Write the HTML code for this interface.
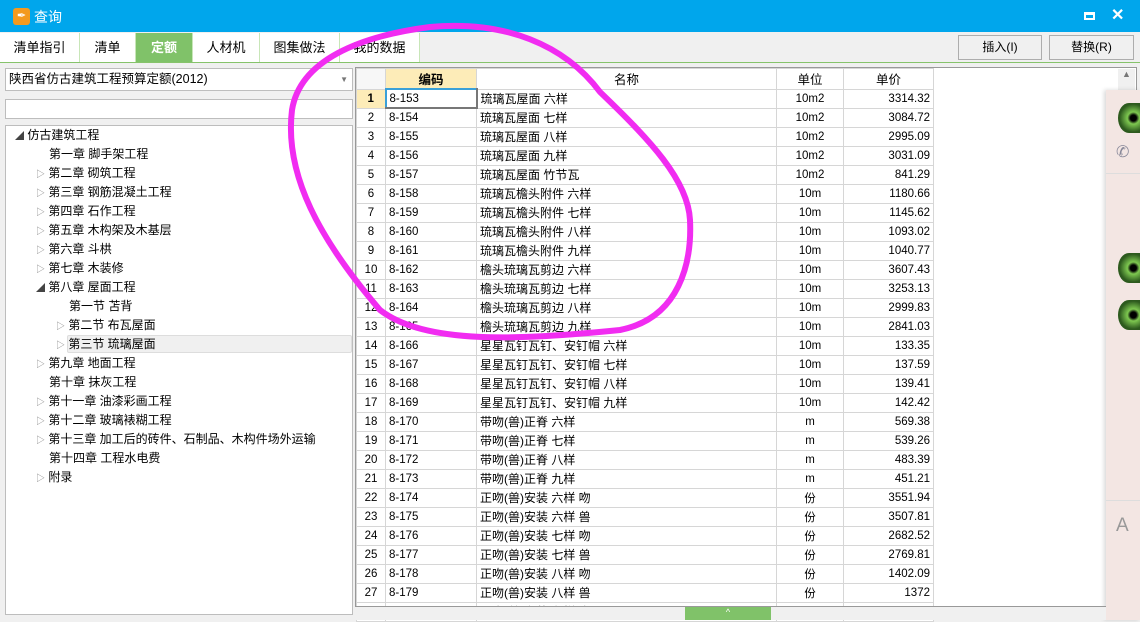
<!DOCTYPE html><html><head><meta charset="utf-8"><style>
*{margin:0;padding:0;box-sizing:border-box}
body{width:1140px;height:620px;overflow:hidden;background:#f0f0f0;font-family:"Liberation Sans","Noto Sans CJK SC",sans-serif;font-size:12px;color:#000;position:relative}
.abs{position:absolute}
.title{left:0;top:0;width:1140px;height:32px;background:#00a6ec;color:#fff}
.tab{top:33px;height:29px;line-height:29px;text-align:center;font-size:13px;background:#fff;border-right:1px solid #c8e6b8}
.btn{top:35px;height:25px;border:1px solid #adadad;background:#f0f0f0;text-align:center;line-height:23px;font-size:12px}
table{border-collapse:collapse;table-layout:fixed;position:absolute;left:356px;top:68px;background:#fff}
td{height:19px;border:1px solid #d6d6d6;font-size:11.5px;padding:0 3px;white-space:nowrap;overflow:hidden}
.tree div{position:absolute;height:19px;line-height:19px;font-size:12px;white-space:nowrap}
.tri{color:#888;font-size:9px}
</style></head><body>
<div class="abs title"><div class="abs" style="left:13px;top:8px;width:17px;height:17px;background:#f39a1e;border-radius:3px;color:#fff;font-size:11px;text-align:center;line-height:17px">&#x2712;</div><div class="abs" style="left:34px;top:7px;font-size:14px">查询</div>
<div class="abs" style="left:1084px;top:12px;width:11px;height:8px;border:2px solid #fff;border-top-width:3px"></div>
<div class="abs" style="left:1111px;top:5px;font-size:16px;font-weight:bold">✕</div></div>
<div class="abs" style="left:0;top:32px;width:1140px;height:31px;background:#f0f0f0;border-bottom:1px solid #86c36b"></div>
<div class="abs tab" style="left:0;width:80px">清单指引</div>
<div class="abs tab" style="left:80px;width:56px">清单</div>
<div class="abs tab" style="left:136px;width:57px;background:#80c269;color:#fff;font-weight:bold">定额</div>
<div class="abs tab" style="left:193px;width:67px">人材机</div>
<div class="abs tab" style="left:260px;width:80px">图集做法</div>
<div class="abs tab" style="left:340px;width:80px">我的数据</div>
<div class="abs btn" style="left:958px;width:84px">插入(I)</div>
<div class="abs btn" style="left:1049px;width:85px">替换(R)</div>
<div class="abs" style="left:5px;top:68px;width:348px;height:23px;background:#fff;border:1px solid #bdbdbd;line-height:21px;padding-left:3px;font-size:12.5px">陕西省仿古建筑工程预算定额(2012)<span class="abs" style="right:4px;top:0;color:#777;font-size:8px">▼</span></div>
<div class="abs" style="left:5px;top:99px;width:348px;height:20px;background:#fff;border:1px solid #bdbdbd"></div>
<div class="abs tree" style="left:5px;top:125px;width:348px;height:490px;background:#fff;border:1px solid #bdbdbd">
<div style="left:9px;top:0"><span class="tri" style="color:#444">◢</span> 仿古建筑工程</div>
<div style="left:43px;top:19px">第一章 脚手架工程</div>
<div style="left:30px;top:38px"><span class="tri">▷</span> 第二章 砌筑工程</div>
<div style="left:30px;top:57px"><span class="tri">▷</span> 第三章 钢筋混凝土工程</div>
<div style="left:30px;top:76px"><span class="tri">▷</span> 第四章 石作工程</div>
<div style="left:30px;top:95px"><span class="tri">▷</span> 第五章 木构架及木基层</div>
<div style="left:30px;top:114px"><span class="tri">▷</span> 第六章 斗栱</div>
<div style="left:30px;top:133px"><span class="tri">▷</span> 第七章 木装修</div>
<div style="left:30px;top:152px"><span class="tri" style="color:#444">◢</span> 第八章 屋面工程</div>
<div style="left:63px;top:171px">第一节 苫背</div>
<div style="left:50px;top:190px"><span class="tri">▷</span> 第二节 布瓦屋面</div>
<div style="left:61px;top:209px;width:285px;height:18px;background:#f0f0f0;border:1px solid #ddd;border-radius:2px"></div>
<div style="left:50px;top:209px"><span class="tri">▷</span> 第三节 琉璃屋面</div>
<div style="left:30px;top:228px"><span class="tri">▷</span> 第九章 地面工程</div>
<div style="left:43px;top:247px">第十章 抹灰工程</div>
<div style="left:30px;top:266px"><span class="tri">▷</span> 第十一章 油漆彩画工程</div>
<div style="left:30px;top:285px"><span class="tri">▷</span> 第十二章 玻璃裱糊工程</div>
<div style="left:30px;top:304px"><span class="tri">▷</span> 第十三章 加工后的砖件、石制品、木构件场外运输</div>
<div style="left:43px;top:323px">第十四章 工程水电费</div>
<div style="left:30px;top:342px"><span class="tri">▷</span> 附录</div>
</div>
<div class="abs" style="left:355px;top:67px;width:782px;height:540px;background:#fff;border:1px solid #999"></div>
<table id="g"><colgroup><col style="width:29px"><col style="width:91px"><col style="width:300px"><col style="width:67px"><col style="width:90px"></colgroup>
<tr style="background:#fff"><td style="background:#f7f7f7"></td><td style="background:#fdecb8;text-align:center;font-weight:bold;font-size:12.5px">编码</td><td style="text-align:center;font-size:12.5px">名称</td><td style="text-align:center;font-size:12.5px">单位</td><td style="text-align:center;font-size:12.5px">单价</td></tr>
</table>
<div class="abs" style="left:1118px;top:69px;width:17px;height:536px;background:#f0f0f0"><div style="color:#777;font-size:9px;text-align:center">▲</div></div>
<div class="abs" style="left:1106px;top:90px;width:34px;height:530px;background:#f3e6e3;box-shadow:-2px 0 4px rgba(0,0,0,.15)">
<div class="abs" style="left:12px;top:13px;width:22px;height:30px;border-radius:50% 0 0 50%;background:radial-gradient(circle at 70% 50%,#000 3px,#7ec850 6px,#2d5a1e 14px)"></div>
<div class="abs" style="left:12px;top:163px;width:22px;height:30px;border-radius:50% 0 0 50%;background:radial-gradient(circle at 70% 50%,#000 3px,#7ec850 6px,#2d5a1e 14px)"></div>
<div class="abs" style="left:12px;top:210px;width:22px;height:30px;border-radius:50% 0 0 50%;background:radial-gradient(circle at 70% 50%,#000 3px,#7ec850 6px,#2d5a1e 14px)"></div>
<div class="abs" style="left:10px;top:52px;color:#889;font-size:16px">✆</div>
<div class="abs" style="left:0;top:83px;width:34px;border-top:1px solid #ddd"></div>
<div class="abs" style="left:0;top:410px;width:34px;border-top:1px solid #ddd"></div>
<div class="abs" style="left:10px;top:425px;color:#999;font-size:19px">A</div>
</div>
<svg class="abs" style="left:0;top:0" width="1140" height="620"><path d="M600 92 C565 45 505 20 430 27 C360 36 300 60 292 110 C284 175 320 240 380 310 C425 345 520 340 620 330 C680 318 692 262 690 220 C688 180 650 140 600 92" fill="none" stroke="#f12cf1" stroke-width="6" stroke-linecap="round"/></svg>
<script>
var d=[["8-153","琉璃瓦屋面 六样","10m2","3314.32"],["8-154","琉璃瓦屋面 七样","10m2","3084.72"],["8-155","琉璃瓦屋面 八样","10m2","2995.09"],["8-156","琉璃瓦屋面 九样","10m2","3031.09"],["8-157","琉璃瓦屋面 竹节瓦","10m2","841.29"],["8-158","琉璃瓦檐头附件 六样","10m","1180.66"],["8-159","琉璃瓦檐头附件 七样","10m","1145.62"],["8-160","琉璃瓦檐头附件 八样","10m","1093.02"],["8-161","琉璃瓦檐头附件 九样","10m","1040.77"],["8-162","檐头琉璃瓦剪边 六样","10m","3607.43"],["8-163","檐头琉璃瓦剪边 七样","10m","3253.13"],["8-164","檐头琉璃瓦剪边 八样","10m","2999.83"],["8-165","檐头琉璃瓦剪边 九样","10m","2841.03"],["8-166","星星瓦钉瓦钉、安钉帽 六样","10m","133.35"],["8-167","星星瓦钉瓦钉、安钉帽 七样","10m","137.59"],["8-168","星星瓦钉瓦钉、安钉帽 八样","10m","139.41"],["8-169","星星瓦钉瓦钉、安钉帽 九样","10m","142.42"],["8-170","带吻(兽)正脊 六样","m","569.38"],["8-171","带吻(兽)正脊 七样","m","539.26"],["8-172","带吻(兽)正脊 八样","m","483.39"],["8-173","带吻(兽)正脊 九样","m","451.21"],["8-174","正吻(兽)安装 六样 吻","份","3551.94"],["8-175","正吻(兽)安装 六样 兽","份","3507.81"],["8-176","正吻(兽)安装 七样 吻","份","2682.52"],["8-177","正吻(兽)安装 七样 兽","份","2769.81"],["8-178","正吻(兽)安装 八样 吻","份","1402.09"],["8-179","正吻(兽)安装 八样 兽","份","1372"],["8-180","正吻(兽)安装 九样 吻","份","1300"]];
var h="";d.forEach(function(r,i){h+='<tr><td style="text-align:center;'+(i==0?'background:#fdecb8;font-weight:bold':'')+'">'+(i+1)+'</td><td'+(i==0?' style="border:2px solid #777;border-left-color:#3aa0d8;border-top-color:#3aa0d8"':'')+'>'+r[0]+'</td><td style="font-size:12px">'+r[1]+'</td><td style="text-align:center">'+r[2]+'</td><td style="text-align:right">'+r[3]+'</td></tr>'});
document.getElementById("g").insertAdjacentHTML("beforeend",h);
</script>
<div class="abs" style="left:356px;top:606px;width:750px;height:14px;background:#f0f0f0;border-top:1px solid #999"></div>
<div class="abs" style="left:685px;top:607px;width:86px;height:13px;background:#80c269;color:#fff;font-size:9px;text-align:center">^</div>
</body></html>
